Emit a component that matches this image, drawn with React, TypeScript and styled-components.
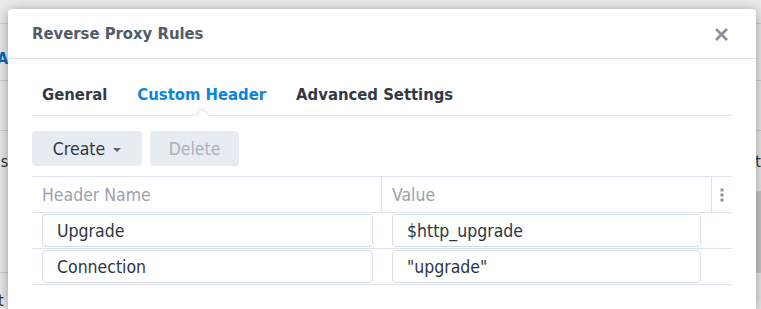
import React from "react";
import styled, { createGlobalStyle } from "styled-components";

const Global = createGlobalStyle`
  html, body { margin: 0; padding: 0; }
  body {
    width: 761px; height: 309px; overflow: hidden;
    background: #ececec;
    font-family: "DejaVu Sans Condensed", "DejaVu Sans", sans-serif;
    font-stretch: condensed;
  }
  #root { position: relative; width: 761px; height: 309px; overflow: hidden; }
`;

const BgPage = styled.div`
  display: flex;
  flex-direction: column;
  width: 761px;
  height: 309px;
  font-size: 16px;
  color: #333;
`;

const BgRow = styled.div<{ $h: number; $pt?: number; $line?: boolean; $dark?: boolean }>`
  box-sizing: border-box;
  height: ${(p) => p.$h}px;
  padding-top: ${(p) => p.$pt ?? 0}px;
  border-bottom: ${(p) => (p.$line ? "1px solid #cfd3d8" : "none")};
  display: flex;
  align-items: center;
  justify-content: space-between;
  background: ${(p) =>
    p.$dark ? "linear-gradient(90deg,#ececec 0,#ececec 99%,#c9c9c9 99%)" : "transparent"};
`;

const BgText = styled.span<{ $blue?: boolean; $shift: number }>`
  margin-left: ${(p) => p.$shift}px;
  color: ${(p) => (p.$blue ? "#0a6cc2" : "#333")};
  font-weight: ${(p) => (p.$blue ? 700 : 400)};
  white-space: nowrap;
`;

const Dialog = styled.div`
  position: absolute;
  left: 8px;
  top: 9px;
  width: 748px;
  height: 300px;
  background: #fff;
  border-radius: 4px 4px 0 0;
  box-shadow: 0 2px 14px rgba(0, 0, 0, 0.38);
  display: flex;
  flex-direction: column;
`;

const Header = styled.div`
  height: 49px;
  padding: 0 27px 0 24px;
  display: flex;
  align-items: center;
  justify-content: space-between;
  border-bottom: 1px solid #dfe5ed;
`;

const Title = styled.div`
  font-size: 16.5px;
  font-weight: 700;
  color: #515b6a;
`;

const CloseBtn = styled.button`
  width: 16px;
  height: 16px;
  padding: 0;
  border: none;
  background: none;
  display: flex;
  align-items: center;
  justify-content: center;
  margin-top: 1px;
`;

const Body = styled.div`
  padding: 0 24px;
  display: flex;
  flex-direction: column;
`;

const Tabs = styled.div`
  display: flex;
  gap: 10px;
  padding: 25px 0 9px;
  border-bottom: 1px solid #dce3ec;
`;

const Tab = styled.div<{ $active?: boolean }>`
  position: relative;
  padding: 0 10px;
  line-height: 22px;
  font-size: 16.5px;
  font-weight: 700;
  color: ${(p) => (p.$active ? "#0a84e2" : "#333a45")};
  &::after {
    content: "";
    display: ${(p) => (p.$active ? "block" : "none")};
    position: absolute;
    left: 50%;
    bottom: -15px;
    width: 10px;
    height: 10px;
    margin-left: -5px;
    background: #fff;
    border-top: 1px solid #dce3ec;
    border-left: 1px solid #dce3ec;
    transform: rotate(45deg);
  }
`;

const Toolbar = styled.div`
  display: flex;
  gap: 8px;
  margin: 15px 0 10px;
`;

const Button = styled.button<{ $w: number; $disabled?: boolean }>`
  width: ${(p) => p.$w}px;
  height: 35px;
  border: none;
  border-radius: 4px;
  background: #e7ecf2;
  color: ${(p) => (p.$disabled ? "#a9b0b9" : "#2e3744")};
  font-family: inherit;
  font-stretch: condensed;
  font-size: 17.5px;
  display: flex;
  align-items: center;
  justify-content: center;
  gap: 8px;
  padding: 0;
`;

const Caret = styled.span`
  width: 0;
  height: 0;
  border-left: 4px solid transparent;
  border-right: 4px solid transparent;
  border-top: 4px solid #5a6373;
  margin-top: 2px;
`;

const Table = styled.div`
  display: grid;
  grid-template-columns: 350px 330px 1fr;
  border-top: 1px solid #dce3ec;
`;

const HeadCell = styled.div<{ $last?: boolean }>`
  height: 35px;
  display: flex;
  align-items: center;
  justify-content: ${(p) => (p.$last ? "center" : "flex-start")};
  padding-left: ${(p) => (p.$last ? 0 : 10)}px;
  font-size: 17.5px;
  color: #9aa2ad;
  border-bottom: 1px solid #dce3ec;
  border-right: ${(p) => (p.$last ? "none" : "1px solid #dce3ec")};
`;

const Cell = styled.div<{ $pad: number }>`
  height: 35px;
  display: flex;
  align-items: center;
  padding: 0 ${(p) => p.$pad}px 0 10px;
  border-bottom: 1px solid #dce3ec;
`;

const Input = styled.div`
  flex: 1;
  height: 31px;
  border: 1px solid #d5dde8;
  border-radius: 4px;
  display: flex;
  align-items: center;
  padding-left: 14px;
  font-size: 17.5px;
  color: #2c3542;
  white-space: nowrap;
`;

const rows = [
  { name: "Upgrade", value: "$http_upgrade" },
  { name: "Connection", value: "\"upgrade\"" },
];

export default function App() {
  return (
    <>
      <Global />
      <BgPage>
        <BgRow $h={24} $line />
        <BgRow $h={57} $pt={12} $line>
          <BgText $blue $shift={-3}>Access Control</BgText>
        </BgRow>
        <BgRow $h={50} $line />
        <BgRow $h={60}>
          <BgText $shift={-26}>Alias:</BgText>
          <BgText $shift={0}>t</BgText>
        </BgRow>
        <BgRow $h={82} $line $dark />
        <BgRow $h={36} $pt={18}>
          <BgText $shift={-38}>Client</BgText>
        </BgRow>
      </BgPage>
      <Dialog>
        <Header>
          <Title>Reverse Proxy Rules</Title>
          <CloseBtn aria-label="Close">
            <svg width="15" height="15" viewBox="0 0 15 15">
              <path d="M2 2 L13 13 M13 2 L2 13" stroke="#8c9199" strokeWidth="2.6" />
            </svg>
          </CloseBtn>
        </Header>
        <Body>
          <Tabs>
            <Tab>General</Tab>
            <Tab $active>Custom Header</Tab>
            <Tab>Advanced Settings</Tab>
          </Tabs>
          <Toolbar>
            <Button $w={110}>
              Create <Caret />
            </Button>
            <Button $w={89} $disabled>
              Delete
            </Button>
          </Toolbar>
          <Table>
            <HeadCell>Header Name</HeadCell>
            <HeadCell>Value</HeadCell>
            <HeadCell $last>
              <svg width="4" height="14" viewBox="0 0 4 14">
                <rect x="0.5" y="0.5" width="3" height="3" fill="#8c9199" />
                <rect x="0.5" y="5.5" width="3" height="3" fill="#8c9199" />
                <rect x="0.5" y="10.5" width="3" height="3" fill="#8c9199" />
              </svg>
            </HeadCell>
            {rows.map((r) => (
              <React.Fragment key={r.name}>
                <Cell $pad={9}>
                  <Input>{r.name}</Input>
                </Cell>
                <Cell $pad={11}>
                  <Input>{r.value}</Input>
                </Cell>
                <Cell $pad={0} />
              </React.Fragment>
            ))}
          </Table>
        </Body>
      </Dialog>
    </>
  );
}
